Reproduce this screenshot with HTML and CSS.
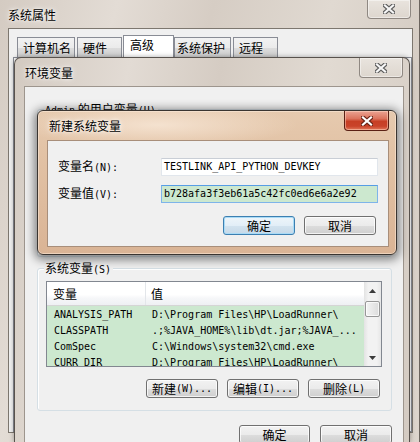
FILE: index.html
```html
<!DOCTYPE html>
<html>
<head>
<meta charset="utf-8">
<link rel="stylesheet" href="styles.css">
</head>
<body>
<div class="win sys">
  <div class="titlebar">
    <span class="title">系统属性</span>
    <div class="close"><svg width="12" height="10" viewBox="0 0 12 10"><path d="M2 1.5L10 8.5M10 1.5L2 8.5" stroke="#5d5d5d" stroke-width="4.4" stroke-linecap="square"/><path d="M2 1.5L10 8.5M10 1.5L2 8.5" stroke="#f6f6f6" stroke-width="2.2" stroke-linecap="square"/></svg></div>
  </div>
  <div class="client sys-client">
    <div class="tabs">
      <div class="tab w58">计算机名</div>
      <div class="tab w45">硬件</div>
      <div class="tab sel">高级</div>
      <div class="tab w57">系统保护</div>
      <div class="tab w45">远程</div>
    </div>
    <div class="tabpanel"></div>
  </div>
</div>

<div class="win env">
  <div class="titlebar">
    <span class="title">环境变量</span>
    <div class="close"><svg width="12" height="10" viewBox="0 0 12 10"><path d="M2 1.5L10 8.5M10 1.5L2 8.5" stroke="#5d5d5d" stroke-width="4.4" stroke-linecap="square"/><path d="M2 1.5L10 8.5M10 1.5L2 8.5" stroke="#f6f6f6" stroke-width="2.2" stroke-linecap="square"/></svg></div>
  </div>
  <div class="client env-client">
    <div class="group user-group">
      <div class="legend"><span class="m">Admin</span> 的用户变量<span class="m">(U)</span></div>
    </div>
    <div class="group sys-group">
      <div class="legend">系统变量<span class="m">(S)</span></div>
      <div class="list">
        <div class="lv">
          <div class="lv-head">
            <div class="hc c1">变量</div>
            <div class="hc c2">值</div>
          </div>
          <div class="lv-rows m">
            <div class="lv-row"><span class="c1">ANALYSIS_PATH</span><span class="c2">D:\Program Files\HP\LoadRunner\</span></div>
            <div class="lv-row"><span class="c1">CLASSPATH</span><span class="c2">.;%JAVA_HOME%\lib\dt.jar;%JAVA_...</span></div>
            <div class="lv-row"><span class="c1">ComSpec</span><span class="c2">C:\Windows\system32\cmd.exe</span></div>
            <div class="lv-row"><span class="c1">CURR_DIR</span><span class="c2">D:\Program Files\HP\LoadRunner\</span></div>
          </div>
        </div>
        <div class="vscroll">
          <div class="sb-btn"><svg width="7" height="4" viewBox="0 0 7 4"><path d="M3.5 0L7 4H0Z" fill="#3b3b3b"/></svg></div>
          <div class="sb-thumb"></div>
          <div class="sb-space"></div>
          <div class="sb-btn"><svg width="7" height="4" viewBox="0 0 7 4"><path d="M0 0H7L3.5 4Z" fill="#3b3b3b"/></svg></div>
        </div>
      </div>
      <div class="btnrow grp-btns">
        <div class="btn">新建<span class="m">(W)...</span></div>
        <div class="btn">编辑<span class="m">(I)...</span></div>
        <div class="btn">删除<span class="m">(L)</span></div>
      </div>
    </div>
    <div class="btnrow env-btns">
      <div class="btn w71">确定</div>
      <div class="btn">取消</div>
    </div>
  </div>
</div>

<div class="win dlg">
  <div class="titlebar">
    <span class="title">新建系统变量</span>
    <div class="close red"><svg width="12" height="10" viewBox="0 0 12 10"><path d="M2 1.5L10 8.5M10 1.5L2 8.5" stroke="#6a2416" stroke-width="4.4" stroke-linecap="square"/><path d="M2 1.5L10 8.5M10 1.5L2 8.5" stroke="#ffffff" stroke-width="2.2" stroke-linecap="square"/></svg></div>
  </div>
  <div class="client dlg-client">
    <div class="frow r1">
      <div class="flabel">变量名<span class="m">(N):</span></div>
      <div class="input m">TESTLINK_API_PYTHON_DEVKEY</div>
    </div>
    <div class="frow r2">
      <div class="flabel">变量值<span class="m">(V):</span></div>
      <div class="input focus m">b728afa3f3eb61a5c42fc0ed6e6a2e92</div>
    </div>
    <div class="btnrow dlg-btns">
      <div class="btn def">确定</div>
      <div class="btn">取消</div>
    </div>
  </div>
</div>
</body>
</html>
```

FILE: styles.css
```css
* { box-sizing: border-box; margin: 0; padding: 0; }
html, body { width: 420px; height: 442px; overflow: hidden; }
body {
  position: relative;
  background: #d8d0c8;
  font-family: "Noto Sans CJK SC", "Noto Sans CJK JP", sans-serif;
  font-size: 12px;
  line-height: 14px;
  color: #000;
}
.m { font-family: "DejaVu Sans Mono", "Liberation Mono", monospace; font-size: 10px; }

.win { position: absolute; display: flex; flex-direction: column; }

.titlebar { display: flex; justify-content: space-between; align-items: flex-start; flex: none; }
.title { text-shadow: 0 0 6px #fff, 0 0 3px rgba(255,255,255,.9); white-space: nowrap; }

.close {
  width: 44px; height: 20px;
  border: 1px solid #8f8882; border-top: none;
  border-radius: 0 0 4px 4px;
  background: linear-gradient(#e9e4de, #ddd6ce);
  box-shadow: inset 0 0 0 1px rgba(255,255,255,.45);
  display: flex; align-items: center; justify-content: center;
}
.close.red {
  width: 45px;
  border-color: #5a2014;
  background: linear-gradient(#eba493 0%, #dc745e 40%, #c73f25 55%, #c9432a 80%, #e2785a 100%);
  box-shadow: inset 0 0 0 1px rgba(255,220,200,.5);
}

.client { background: #f0f0f0; }

/* ---------- system properties window ---------- */
.sys {
  left: 0; top: 0; width: 420px; height: 442px;
  padding: 0 6px 0 8px;
  border-right: 1px solid #6b645e;
  background: linear-gradient(105deg, #d4cbc2 0%, #e3dcd5 22%, #d6cdc4 40%, #e0d9d1 62%, #d5ccc3 82%, #ddd5cd 100%);
}
.sys .titlebar { height: 28px; }
.sys .title { padding: 8px 0 0 0; }
.sys .close { margin-right: 2px; height: 19px; }
.sys-client {
  height: 405px;
  border: 1px solid #7d776f;
  padding: 6px 0 0 8px;
  display: flex; flex-direction: column;
}
.tabs { display: flex; align-items: flex-end; height: 22px; }
.tab {
  height: 20px; padding: 3px 0 0 5px;
  border: 1px solid #898c95; border-bottom: none;
  background: linear-gradient(#f2f2f2, #ebebeb 50%, #dddddd 51%, #cfcfcf);
  margin-right: 2px;
  white-space: nowrap;
}
.w58 { width: 58px; }
.w45 { width: 45px; }
.w57 { width: 57px; padding-left: 2px; }
.tab.sel {
  width: 51px; height: 22px; padding-left: 6px; padding-top: 2px;
  background: #fff; margin-left: -1px; margin-right: 0;
}
.tabpanel { flex: 1; border: 1px solid #898c95; background: #fff; margin-left: -4px; }

/* ---------- environment window ---------- */
.env {
  left: 14px; top: 57px; width: 396px; height: 385px;
  border: 1px solid #58524d; border-bottom: none;
  border-radius: 7px 7px 0 0;
  padding: 0 5px 0 9px;
  background: linear-gradient(100deg, #d3cac1 0%, #e2dbd4 25%, #d5ccc3 45%, #e1dad2 68%, #d4cbc2 100%);
  box-shadow: 0 0 5px rgba(0,0,0,.35);
  overflow: hidden;
}
.env .titlebar { height: 28px; }
.env .title { padding: 8px 0 0 1px; }
.env .close { margin-right: 1px; }
.env-client {
  flex: 1;
  border: 1px solid #9d958d; border-bottom: none;
  display: flex; flex-direction: column;
}
.group {
  border: 1px solid #d5dfe5;
  border-radius: 3px;
  box-shadow: inset 1px 1px 0 #fff;
  margin: 0 11px 0 12px;
  flex: none;
}
.legend {
  width: max-content; height: 14px;
  margin: -8px 0 0 6px; padding: 0 2px 0 1px;
  background: #f0f0f0;
  white-space: nowrap;
}
.user-group { margin-top: 22px; height: 148px; }
.sys-group { margin-top: 11px; height: 143px; }

.list {
  margin: 6px 9px 0 8px;
  height: 86px;
  border: 1px solid #828790;
  display: flex;
  background: #cce8cf;
}
.lv { flex: 1; display: flex; flex-direction: column; overflow: hidden; }
.lv-head {
  height: 24px; flex: none; display: flex;
  background: linear-gradient(#ffffff 0%, #ffffff 55%, #f6f7f9 70%, #eef0f3 100%);
  border-bottom: 1px solid #d5d5d5;
}
.hc { display: flex; align-items: center; height: 100%; }
.hc.c1 { width: 99px; padding-left: 6px; border-right: 1px solid #e3e6ea; }
.hc.c2 { padding-left: 5px; }
.lv-rows { padding-top: 1px; }
.lv-row { display: flex; height: 16px; align-items: center; white-space: nowrap; }
.lv-row .c1 { width: 100px; padding-left: 7px; flex: none; }
.lv-row .c2 { padding-left: 5px; }

.vscroll {
  width: 17px; flex: none; display: flex; flex-direction: column;
  background: linear-gradient(90deg, #e3e3e3, #f2f2f2 25%, #f2f2f2 75%, #e6e6e6);
}
.sb-btn { height: 17px; display: flex; align-items: center; justify-content: center; flex: none; }
.sb-thumb {
  height: 16px; margin: 2px 1px 0 1px; flex: none;
  border: 1px solid #979797; border-radius: 2px;
  background: linear-gradient(90deg, #f4f4f4, #e8e8e8 50%, #dcdcdc);
  box-shadow: inset 0 0 0 1px rgba(255,255,255,.7);
}
.sb-space { flex: 1; }

.btnrow { display: flex; justify-content: flex-end; flex: none; }
.btn {
  width: 72px; height: 19px;
  border: 1px solid #707070; border-radius: 3px;
  background: linear-gradient(#f2f2f2 0%, #ebebeb 50%, #dddddd 51%, #cfcfcf 100%);
  box-shadow: inset 0 0 0 1px rgba(255,255,255,.75);
  display: flex; align-items: center; justify-content: center;
  white-space: nowrap;
}
.w71 { width: 71px; }
.btn.def {
  border-color: #3c7fb1;
  box-shadow: inset 0 0 0 1px #a9dbf6;
  background: linear-gradient(#eef5fa 0%, #e2eef7 50%, #d3e3ef 51%, #c6d9e8 100%);
}
.grp-btns { margin-top: 12px; padding-right: 11px; gap: 9px; }
.env-btns { margin: 14px 11px 0 0; gap: 10px; }

/* ---------- new variable dialog ---------- */
.dlg {
  left: 37px; top: 110px; width: 360px; height: 145px;
  border: 1px solid #3a3531;
  border-radius: 6px;
  padding: 0 7px 7px 9px;
  background: linear-gradient(180deg, #e6caaf 0%, #e2c2a5 30%, #dab495 100%);
  box-shadow: 0 2px 10px 3px rgba(0,0,0,.45), inset 0 0 0 1px rgba(255,240,225,.5);
}
.dlg .titlebar {
  height: 29px;
  background: radial-gradient(ellipse 140px 22px at 120px 14px, rgba(248,232,216,.8), rgba(248,232,216,0));
  margin: 0 -7px 0 -9px; padding: 0 7px 0 9px;
}
.dlg .title { padding: 8px 0 0 2px; }
.dlg-client {
  flex: 1;
  border: 1px solid #a88e7a;
  display: flex; flex-direction: column;
}
.frow { display: flex; align-items: center; height: 18px; flex: none; }
.r1 { margin-top: 17px; }
.r2 { margin-top: 9px; }
.flabel { width: 113px; padding-left: 10px; white-space: nowrap; }
.input {
  width: 217px; height: 18px;
  border: 1px solid #e1e6ec; border-top-color: #c9ced6;
  background: #fff;
  padding-left: 2px;
  display: flex; align-items: center;
  white-space: nowrap;
}
.input.focus { border-color: #7eb4ea; border-top-color: #569de5; background: #cce8cf; }
.dlg-btns { margin-top: 13px; padding-right: 12px; gap: 9px; }
```
